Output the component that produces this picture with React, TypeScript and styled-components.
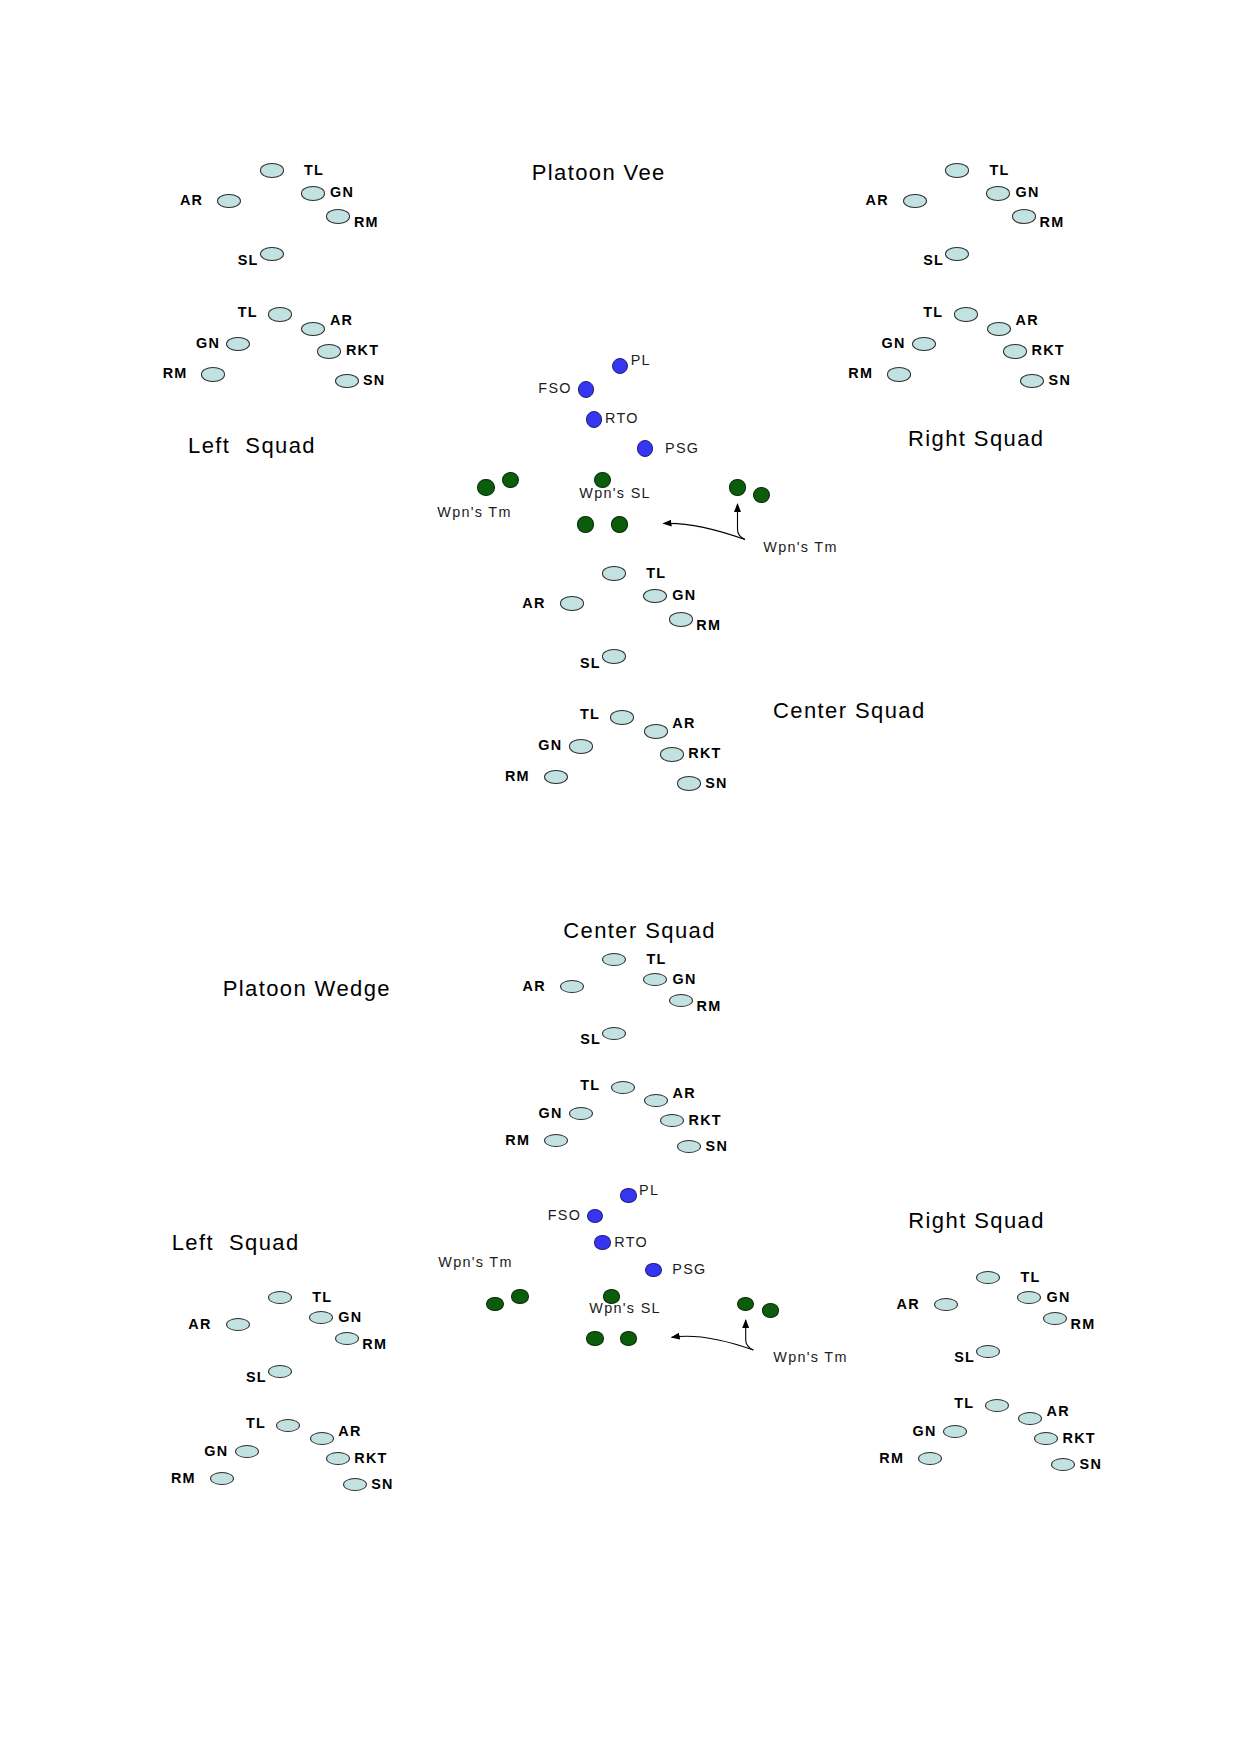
import React from "react"
import styled, { createGlobalStyle } from "styled-components"

// page coordinates below were read off the reference sheet (1239 x 1754)

const GlobalStyle = createGlobalStyle`
  html, body {
    margin: 0;
    padding: 0;
    background: #ffffff;
  }
  body {
    font-family: "Liberation Sans", Arial, sans-serif;
    color: #000;
  }
`

const Page = styled.main`
  width: 1239px;
  min-height: 1754px;
  display: flex;
  flex-direction: column;
  background: #ffffff;
`

const Diagram = styled.section<{ $height: number }>`
  position: relative;
  width: 100%;
  height: ${p => p.$height}px;
  flex-shrink: 0;
`

type Kind = "member" | "hq" | "weapons"

const fills: Record<Kind, string> = {
  member: "#c2e1e1",
  hq: "#3535f2",
  weapons: "#0b5c0b",
}

const rims: Record<Kind, string> = {
  member: "#2e2e2e",
  hq: "#20207a",
  weapons: "#072a07",
}

const Disc = styled.span<{ $x: number; $y: number; $w: number; $h: number; $kind: Kind }>`
  position: absolute;
  left: ${p => p.$x - p.$w / 2}px;
  top: ${p => p.$y - p.$h / 2}px;
  width: ${p => p.$w}px;
  height: ${p => p.$h}px;
  box-sizing: border-box;
  border-radius: 50%;
  background: ${p => fills[p.$kind]};
  border: 1.2px solid ${p => rims[p.$kind]};
`

// $y is the top of the capitals, so shift the box up by the font's cap offset
const Tag = styled.span<{ $x: number; $y: number; $size: number; $bold?: boolean }>`
  position: absolute;
  left: ${p => p.$x}px;
  top: ${p => p.$y - p.$size * 0.13}px;
  font-size: ${p => p.$size}px;
  font-weight: ${p => (p.$bold ? 700 : 400)};
  line-height: 1;
  letter-spacing: ${p => (p.$bold ? 1.2 : 1.3)}px;
  white-space: pre;
  color: ${p => (p.$bold ? "#000" : "#1c1c1c")};
`

const Heading = styled(Tag)`
  color: #000;
  letter-spacing: 1.4px;
`

const Arrows = styled.svg`
  position: absolute;
  left: 0;
  top: 0;
  width: 100%;
  height: 100%;
  overflow: visible;
  pointer-events: none;
`

type Pt = [number, number]

const MEMBERS: { role: string; at: Pt; label: Pt }[] = [
  { role: "TL", at: [0, 0], label: [32.3, -5.7] },
  { role: "AR", at: [-42.4, 30.3], label: [-91.7, 24.3] },
  { role: "GN", at: [41, 22.6], label: [58.3, 16.3] },
  { role: "RM", at: [66.6, 46], label: [82.3, 46.3] },
  { role: "SL", at: [0, 83.3], label: [-34, 84.3] },
  { role: "TL", at: [8.3, 144], label: [-34, 136] },
  { role: "AR", at: [41.6, 158.3], label: [58.3, 144.3] },
  { role: "GN", at: [-33.4, 173.3], label: [-75.7, 167] },
  { role: "RKT", at: [57.6, 181], label: [74.3, 174.3] },
  { role: "RM", at: [-58.4, 203.6], label: [-109, 197.3] },
  { role: "SN", at: [75, 210.3], label: [91.3, 204.3] },
]

function Squad({ x, y, sy }: { x: number; y: number; sy: number }) {
  return (
    <>
      {MEMBERS.map((m, i) => (
        <React.Fragment key={i}>
          <Disc $kind="member" $x={x + m.at[0]} $y={y + m.at[1] * sy} $w={24} $h={14.5 * sy} />
          <Tag $bold $size={14.4} $x={x + m.label[0]} $y={y + m.label[1] * sy}>
            {m.role}
          </Tag>
        </React.Fragment>
      ))}
    </>
  )
}

type Formation = {
  name: string
  top: number
  height: number
  sy: number
  dot: [number, number]
  squads: Pt[]
  headings: { text: string; at: Pt }[]
  hq: { text: string; at: Pt; label: Pt }[]
  weapons: Pt[]
  weaponTags: { text: string; at: Pt }[]
  arrow: { from: Pt; up: Pt; left: Pt }
}

const FORMATIONS: Formation[] = [
  {
    name: "vee",
    top: 0,
    height: 780,
    sy: 1,
    dot: [16.5, 16.5],
    squads: [[271.7, 170.7], [957.3, 170.7], [614, 573.3]],
    headings: [
      { text: "Platoon Vee", at: [531.7, 165] },
      { text: "Left  Squad", at: [188, 437.7] },
      { text: "Right Squad", at: [908, 431] },
      { text: "Center Squad", at: [773, 702.7] },
    ],
    hq: [
      { text: "PL", at: [620, 366], label: [630.7, 355] },
      { text: "FSO", at: [586, 389.3], label: [538.3, 383.3] },
      { text: "RTO", at: [594, 419.3], label: [605, 413.3] },
      { text: "PSG", at: [645, 448.7], label: [665, 443.3] },
    ],
    weapons: [[486, 487.3], [510.7, 480], [602.7, 480], [585.7, 524.3], [619.3, 524.3], [737.3, 487.3], [761.7, 495]],
    weaponTags: [
      { text: "Wpn's Tm", at: [437.3, 506.7] },
      { text: "Wpn's SL", at: [579.3, 488.3] },
      { text: "Wpn's Tm", at: [763.3, 541.7] },
    ],
    arrow: { from: [745, 539.5], up: [737.5, 504], left: [663.5, 523.5] },
  },
  {
    name: "wedge",
    top: 780,
    height: 974,
    sy: 0.89,
    dot: [16.5, 14.5],
    squads: [[614.3, 959.3], [280, 1297.3], [988.3, 1277.3]],
    headings: [
      { text: "Center Squad", at: [563.3, 922.7] },
      { text: "Platoon Wedge", at: [222.7, 981] },
      { text: "Left  Squad", at: [171.7, 1235] },
      { text: "Right Squad", at: [908.3, 1213.3] },
    ],
    hq: [
      { text: "PL", at: [628.3, 1195.7], label: [639, 1185] },
      { text: "FSO", at: [595, 1216], label: [547.7, 1210] },
      { text: "RTO", at: [602.7, 1242.7], label: [614.3, 1236.7] },
      { text: "PSG", at: [653.3, 1270], label: [672.3, 1264.3] },
    ],
    weapons: [[495, 1304], [520, 1296.7], [611.7, 1296.7], [595, 1338.3], [628.3, 1338.3], [745.7, 1304], [770.7, 1310.7]],
    weaponTags: [
      { text: "Wpn's Tm", at: [438.3, 1256.7] },
      { text: "Wpn's SL", at: [589.3, 1303.3] },
      { text: "Wpn's Tm", at: [773.3, 1351.7] },
    ],
    arrow: { from: [753.3, 1350], up: [745.7, 1320], left: [671.7, 1337.3] },
  },
]

function Pointers({ id, top, from, up, left }: { id: string; top: number } & Formation["arrow"]) {
  const [fx, fy] = [from[0], from[1] - top]
  const [ux, uy] = [up[0], up[1] - top]
  const [lx, ly] = [left[0], left[1] - top]
  const upPath = `M${fx},${fy} Q${ux},${fy - 3.5} ${ux},${fy - 10} L${ux},${uy}`
  const leftPath = `M${fx},${fy} Q${fx - 49.5},${fy - 17.6} ${lx},${ly}`
  return (
    <Arrows>
      <defs>
        <marker id={id} markerUnits="userSpaceOnUse" markerWidth="9" markerHeight="7" refX="8" refY="3.5" orient="auto">
          <path d="M0,0 L9,3.5 L0,7 z" fill="#000" />
        </marker>
      </defs>
      <path d={upPath} fill="none" stroke="#000" strokeWidth="1.1" markerEnd={`url(#${id})`} />
      <path d={leftPath} fill="none" stroke="#000" strokeWidth="1.1" markerEnd={`url(#${id})`} />
    </Arrows>
  )
}

function FormationSheet({ f }: { f: Formation }) {
  const y = (v: number) => v - f.top
  return (
    <Diagram $height={f.height}>
      {f.headings.map((h, i) => (
        <Heading key={i} $size={22} $x={h.at[0]} $y={y(h.at[1])}>
          {h.text}
        </Heading>
      ))}
      {f.squads.map((s, i) => (
        <Squad key={i} x={s[0]} y={y(s[1])} sy={f.sy} />
      ))}
      {f.hq.map(h => (
        <React.Fragment key={h.text}>
          <Disc $kind="hq" $x={h.at[0]} $y={y(h.at[1])} $w={f.dot[0]} $h={f.dot[1]} />
          <Tag $size={14.4} $x={h.label[0]} $y={y(h.label[1])}>
            {h.text}
          </Tag>
        </React.Fragment>
      ))}
      {f.weapons.map((w, i) => (
        <Disc key={i} $kind="weapons" $x={w[0]} $y={y(w[1])} $w={f.dot[0] + 1} $h={f.dot[1]} />
      ))}
      {f.weaponTags.map((t, i) => (
        <Tag key={i} $size={14.4} $x={t.at[0]} $y={y(t.at[1])}>
          {t.text}
        </Tag>
      ))}
      <Pointers id={`arrow-${f.name}`} top={f.top} {...f.arrow} />
    </Diagram>
  )
}

export default function App() {
  return (
    <Page>
      <GlobalStyle />
      {FORMATIONS.map(f => (
        <FormationSheet key={f.name} f={f} />
      ))}
    </Page>
  )
}
